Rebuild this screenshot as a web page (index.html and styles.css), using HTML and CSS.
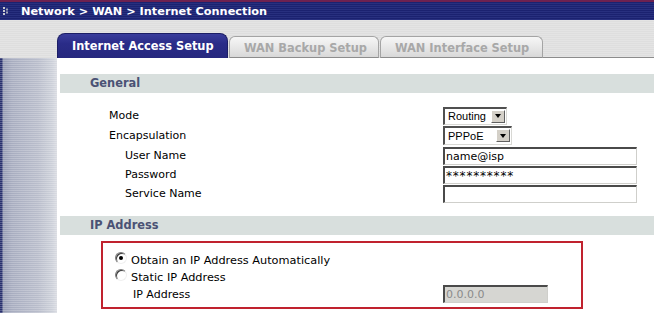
FILE: index.html
```html
<!DOCTYPE html>
<html>
<head>
<meta charset="utf-8">
<link rel="stylesheet" href="styles.css">
</head>
<body>
<div class="topbar">
  <svg class="crumb-icon" width="7" height="8" viewBox="0 0 7 8">
    <rect x="0" y="0" width="2" height="2" fill="#c8c8d0"/>
    <rect x="0" y="3" width="2" height="2" fill="#c8c8d0"/>
    <rect x="0" y="6" width="2" height="2" fill="#c8c8d0"/>
    <rect x="3" y="1.5" width="2" height="2" fill="#a0a4b8"/>
    <rect x="3" y="4.5" width="2" height="2" fill="#a0a4b8"/>
  </svg>
  <span class="title">Network &gt; WAN &gt; Internet Connection</span>
</div>
<div class="tabbar">
  <div class="tab active">Internet Access Setup</div>
  <div class="tab backup">WAN Backup Setup</div>
  <div class="tab iface">WAN Interface Setup</div>
  <div class="tabfill"></div>
</div>
<div class="main">
  <div class="sidebar"></div>
  <div class="panel">
    <div class="section">General</div>
    <div class="form">
      <div class="row r1">
        <div class="label">Mode</div>
        <div class="select w64"><span class="sel-text">Routing</span><span class="sel-btn"><span class="arrow"></span></span></div>
      </div>
      <div class="row r2">
        <div class="label">Encapsulation</div>
        <div class="select w69 h19"><span class="sel-text">PPPoE</span><span class="sel-btn"><span class="arrow"></span></span></div>
      </div>
      <div class="row r3">
        <div class="label sub">User Name</div>
        <div class="input">name@isp</div>
      </div>
      <div class="row r4">
        <div class="label sub">Password</div>
        <div class="input pw">**********</div>
      </div>
      <div class="row r5">
        <div class="label sub">Service Name</div>
        <div class="input"></div>
      </div>
    </div>
    <div class="section s2">IP Address</div>
    <div class="ipbox">
      <div class="irow">
        <span class="radio on"></span>
        <span class="rlabel">Obtain an IP Address Automatically</span>
      </div>
      <div class="irow">
        <span class="radio"></span>
        <span class="rlabel">Static IP Address</span>
      </div>
      <div class="irow ip">
        <span class="iplabel">IP Address</span>
        <div class="input disabled">0.0.0.0</div>
      </div>
    </div>
  </div>
</div>
</body>
</html>
```
FILE: styles.css
```css
html, body {
  margin: 0;
  padding: 0;
  width: 654px;
  height: 313px;
  overflow: hidden;
  background: #fff;
  font-family: "DejaVu Sans", Verdana, sans-serif;
  font-size: 11px;
  color: #000;
}

.topbar {
  height: 20px;
  box-sizing: border-box;
  border-top: 2px solid #6e2150;
  background: repeating-linear-gradient(to bottom, #1b2270 0 1px, #28307f 1px 2px);
  display: flex;
  align-items: center;
  padding-left: 3px;
}
.crumb-icon { display: block; }
.title {
  margin-left: 11px;
  color: #fff;
  font-weight: bold;
  font-size: 11.3px;
  white-space: nowrap;
}

.tabbar {
  height: 38px;
  box-sizing: border-box;
  display: flex;
  align-items: flex-end;
  padding-left: 57px;
  background: repeating-linear-gradient(to bottom, #e4e4e4 0 1px, #dedede 1px 2px);
}
.tab {
  box-sizing: border-box;
  display: flex;
  align-items: center;
  padding-left: 14px;
  font-weight: bold;
  font-size: 11.4px;
  white-space: nowrap;
}
.tab.active {
  width: 171px;
  height: 25px;
  background: linear-gradient(to bottom, #3a3d9c, #2a2c88 40%, #26287e);
  border: 1px solid #1c1e66;
  border-bottom: none;
  border-radius: 8px 8px 0 0;
  color: #fff;
}
.tab.backup, .tab.iface {
  height: 22px;
  background: linear-gradient(to bottom, #f6f6f6, #e8e8e8 50%, #d8d8d8);
  border: 1px solid #a4a4a4;
  border-bottom-color: #8c8c8c;
  border-radius: 6px 6px 0 0;
  color: #a8a8a8;
  padding-top: 1px;
}
.tab.backup { width: 150px; margin-left: 1px; }
.tab.iface { width: 163px; margin-left: 1px; }
.tabfill {
  flex: 1;
  height: 1px;
  background: #8c8c8c;
}

.main {
  display: flex;
  height: 255px;
}
.sidebar {
  width: 57px;
  flex: none;
  background:
    repeating-linear-gradient(to bottom, rgba(255,255,255,0.22) 0 1px, rgba(255,255,255,0) 1px 2px),
    linear-gradient(to right, #28306e 0, #28306e 2px, #959bb2 3px, #a8adc0 12px, #b9bdcb 38px, #ccd0d9 52px, #dadce2 57px);
}
.panel {
  flex: 1;
  background: #fff;
}

.section {
  margin: 16px 0 0 3px;
  height: 19px;
  line-height: 19px;
  padding-left: 30px;
  background: #d8dfdd;
  color: #4a5274;
  font-weight: bold;
  font-size: 11.4px;
}
.section.s2 { margin-top: 13px; }

.form {
  margin-top: 13px;
  padding-left: 52px;
}
.row {
  display: flex;
  align-items: center;
  height: 19px;
}
.row.r2 { height: 20px; }
.row.r3 { height: 20px; padding-top: 1px; box-sizing: border-box; }
.label {
  width: 334px;
  flex: none;
  box-sizing: border-box;
  white-space: nowrap;
}
.label.sub { padding-left: 16px; }

.select {
  display: flex;
  box-sizing: border-box;
  height: 18px;
  border-style: solid;
  border-width: 2px 1px 1px 2px;
  border-color: #505050 #d8d8d4 #d8d8d4 #505050;
  background: #fff;
  font-family: "Liberation Sans", Arial, sans-serif;
  font-size: 11px;
  align-items: center;
}
.select.w64 { width: 64px; }
.select.w69 { width: 69px; }
.select.h19 { height: 19px; }
.sel-text {
  flex: 1;
  padding-left: 3px;
}
.sel-btn {
  width: 14px;
  height: 13px;
  box-sizing: border-box;
  margin-right: 1px;
  background: #d4d0c8;
  border-style: solid;
  border-width: 1px;
  border-color: #fff #606060 #606060 #fff;
  display: flex;
  align-items: center;
  justify-content: center;
}
.arrow {
  width: 0;
  height: 0;
  border-left: 3.5px solid transparent;
  border-right: 3.5px solid transparent;
  border-top: 4px solid #000;
}

.input {
  width: 194px;
  height: 18px;
  box-sizing: border-box;
  border-style: solid;
  border-width: 2px 1px 1px 2px;
  border-color: #4a4a4a #cfcfcb #cfcfcb #4a4a4a;
  background: #fff;
  padding-left: 1px;
  line-height: 15px;
  font-size: 11px;
  white-space: nowrap;
}
.input.pw {
  font-size: 12px;
  letter-spacing: 0.8px;
  line-height: 17px;
}

.ipbox {
  margin: 6px 0 0 44px;
  width: 482px;
  height: 68px;
  box-sizing: border-box;
  border: 2px solid #c0222e;
  padding: 8px 0 0 12px;
}
.irow {
  display: flex;
  align-items: center;
  height: 18px;
}
.irow + .irow { height: 17px; }
.irow.ip { height: 18px; margin-top: -1px; }
.radio {
  width: 12px;
  height: 12px;
  box-sizing: border-box;
  border-radius: 50%;
  border: 1px solid;
  border-color: #7c7c7c #f0f0f0 #f0f0f0 #7c7c7c;
  box-shadow: inset 1px 1px 0 #3c3c3c;
  background: #fff;
  display: flex;
  align-items: center;
  justify-content: center;
  margin-top: -5px;
}
.radio.on::after {
  content: "";
  width: 4px;
  height: 4px;
  border-radius: 50%;
  background: #000;
}
.rlabel {
  margin-left: 4px;
  font-size: 11.3px;
  white-space: nowrap;
}
.iplabel {
  width: 328px;
  padding-left: 18px;
  flex: none;
  box-sizing: border-box;
  white-space: nowrap;
}
.input.disabled {
  width: 105px;
  background: #d6d6d2;
  color: #8a8a8a;
}
```
